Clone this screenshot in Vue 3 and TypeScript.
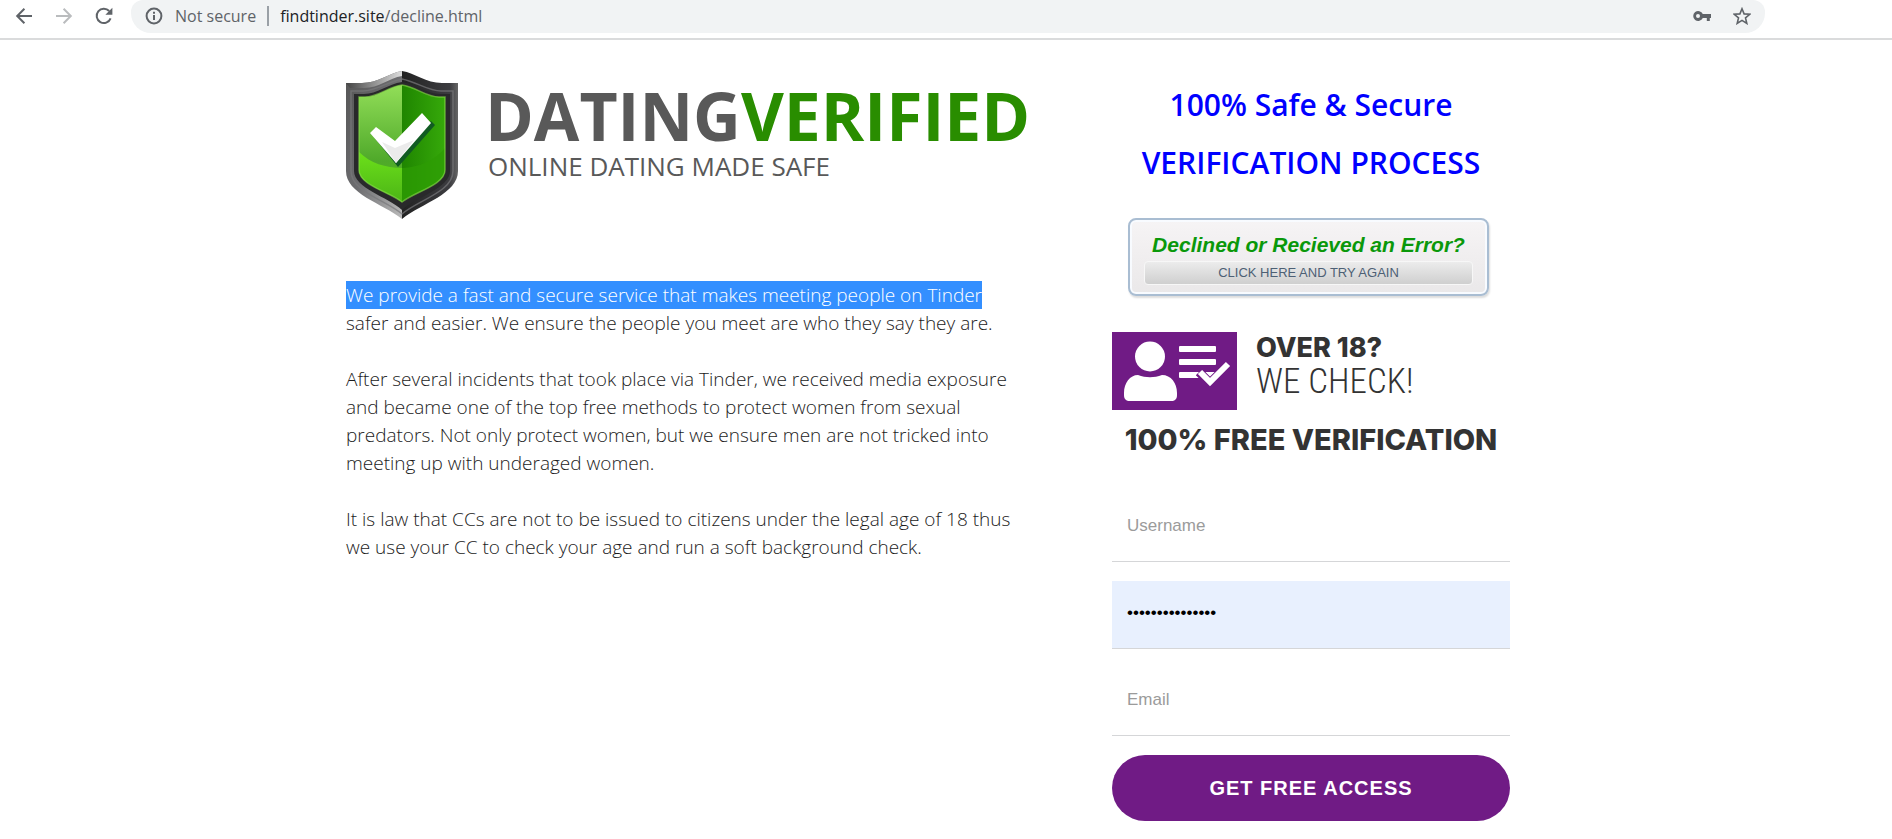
<script setup lang="ts">
import { ref } from 'vue'

const username = ref('')
const password = ref('datingverified1')
const email = ref('')
</script>

<template>
  <div class="window">
    <header class="toolbar">
      <nav class="nav" aria-label="Browser navigation">
        <button type="button" class="icon-button" aria-label="Back">
          <svg width="18" height="18" viewBox="0 0 18 18" fill="none" stroke="#5f6368" stroke-width="2">
            <path d="M17 9H2.4M9.4 1.8 2.2 9l7.2 7.2" />
          </svg>
        </button>
        <button type="button" class="icon-button" aria-label="Forward">
          <svg width="18" height="18" viewBox="0 0 18 18" fill="none" stroke="#babcbe" stroke-width="2">
            <path d="M1 9h14.6M8.6 1.8 15.8 9l-7.2 7.2" />
          </svg>
        </button>
        <button type="button" class="icon-button" aria-label="Reload">
          <svg width="18" height="18" viewBox="0 0 18 18">
            <path d="M15.6 11.4A7.2 7.2 0 1 1 14.2 4" fill="none" stroke="#5f6368" stroke-width="2" />
            <path d="M17.4.8v7h-7z" fill="#5f6368" />
          </svg>
        </button>
      </nav>
      <div class="omnibox">
        <svg width="18" height="18" viewBox="0 0 18 18" fill="none" stroke="#5f6368" stroke-width="2">
          <circle cx="9" cy="9" r="7.4" />
          <path d="M9 8v5M9 4.8v2" />
        </svg>
        <span class="status">Not secure</span>
        <span class="divider"></span>
        <span class="url"><span class="host">findtinder.site</span>/decline.html</span>
        <div class="actions">
          <button type="button" class="icon-button" aria-label="Saved passwords">
            <svg width="18" height="12" viewBox="0 0 18 12" fill="#5f6368">
              <path fill-rule="evenodd" d="M9.8 4H18v4h-1.2v3h-3V8h-4A5 5 0 1 1 9.8 4zM5 4a2 2 0 1 0 0 4 2 2 0 0 0 0-4z" />
            </svg>
          </button>
          <button type="button" class="icon-button" aria-label="Bookmark this page">
            <svg width="18" height="18" viewBox="0 0 18 18" fill="none" stroke="#5f6368" stroke-width="1.6">
              <path d="m9 1.800 2.100 5.100 5.700.4-4.300 3.600 1.300 5.500L9 13.400l-4.800 3 1.300-5.500L1.200 7.300l5.700-.4z" />
            </svg>
          </button>
        </div>
      </div>
    </header>

    <main class="page">
      <section class="about">
        <div class="brand">
          <svg class="shield" width="112" height="148" viewBox="0 0 112 148">
            <defs>
              <linearGradient id="rimLeft" x1="0" x2="1" y1="0" y2="1">
                <stop offset="0" stop-color="#555" />
                <stop offset=".5" stop-color="#6d6d70" />
                <stop offset="1" stop-color="#bbb" />
              </linearGradient>
              <linearGradient id="rimRight" x1="0" x2="1" y1="0" y2="0">
                <stop offset="0" stop-color="#222" />
                <stop offset=".85" stop-color="#3c3c40" />
                <stop offset="1" stop-color="#666" />
              </linearGradient>
              <linearGradient id="rimTop" x1="0" x2="1" y1="0" y2="0">
                <stop offset="0" stop-color="#444" />
                <stop offset="1" stop-color="#ddd" />
              </linearGradient>
              <linearGradient id="leafLight" x1="0" x2="0" y1="0" y2="1">
                <stop offset="0" stop-color="#92de58" />
                <stop offset=".65" stop-color="#4fa92a" />
                <stop offset="1" stop-color="#55bd14" />
              </linearGradient>
              <linearGradient id="leafDark" x1="0" x2="1" y1="0" y2="0">
                <stop offset="0" stop-color="#1f8500" />
                <stop offset="1" stop-color="#36a90a" />
              </linearGradient>
              <linearGradient id="glow" x1="0" x2="0" y1="0" y2="1">
                <stop offset="0" stop-color="#6ce01a" />
                <stop offset="1" stop-color="#4cb516" />
              </linearGradient>
            </defs>
            <path d="M56 0C43 2 32 12 16 12H0v88c0 23 36 32 56 48z" fill="url(#rimLeft)" />
            <path d="M56 0c13 2 24 12 40 12h16v88c0 23-36 32-56 48z" fill="url(#rimRight)" />
            <path d="M56 0C43 2 32 12 16 12H0l4 5h14c15 0 25-10 38-12z" fill="url(#rimTop)" />
            <path d="M56 11C42 13 31 23 18 23H8v77c0 17 34 26 48 39 14-13 48-22 48-39V23H94C81 23 70 13 56 11z" fill="#29292b" />
            <path d="M56 8C41 11 30 20 17 20H5v80c0 21 35 29 51 43 16-14 51-22 51-43V20H95C82 20 71 11 56 8z" fill="none" stroke="#77777b" stroke-width="1.5" opacity=".7" />
            <path d="M56 14C42 16 32 26 19 26h-6v73c0 15 31 22 43 32z" fill="url(#leafLight)" />
            <path d="M56 14c14 2 24 12 37 12h6v73c0 15-31 22-43 32z" fill="url(#leafDark)" />
            <path d="M13 81c11 11 27 16 43 16v34C44 121 13 114 13 99z" fill="url(#glow)" />
            <path d="M56 97c18-1 32-7 43-20v22c0 15-31 22-43 32z" fill="#2d9c04" opacity=".75" />
            <path d="M56 14C42 16 32 26 19 26h-6v73c0 15 31 22 43 32 12-10 43-17 43-32V26h-6C80 26 70 16 56 14z" fill="none" stroke="#8be04b" stroke-width="1.5" opacity=".6" />
            <path d="m27 65 25 31 37-42-4-4-34 38z" fill="#115b22" />
            <path d="m24 62 6-6 19 14 27-28 9 10-35 40z" fill="#fff" />
            <path d="m36 71 13 6 19-8-18 23z" fill="#ebebeb" />
          </svg>
          <div class="wordmark">
            <div class="name"><span>DATING</span><span class="verified">VERIFIED</span></div>
            <div class="tagline">ONLINE DATING MADE SAFE</div>
          </div>
        </div>

        <p><mark>We provide a fast and secure service that makes meeting people on Tinder</mark><br />safer and easier. We ensure the people you meet are who they say they are.</p>
        <p>After several incidents that took place via Tinder, we received media exposure<br />and became one of the top free methods to protect women from sexual<br />predators. Not only protect women, but we ensure men are not tricked into<br />meeting up with underaged women.</p>
        <p>It is law that CCs are not to be issued to citizens under the legal age of 18 thus<br />we use your CC to check your age and run a soft background check.</p>
      </section>

      <aside class="signup">
        <h1>100% Safe &amp; Secure<br />VERIFICATION PROCESS</h1>

        <button type="button" class="retry">
          <span class="retry-title">Declined or Recieved an Error?</span>
          <span class="retry-action">CLICK HERE AND TRY AGAIN</span>
        </button>

        <div class="age">
          <svg width="125" height="78" viewBox="0 0 125 78">
            <path d="M0 0h125v78H0z" fill="#701b85" />
            <g fill="#fff">
              <circle cx="38" cy="24.500" r="15" />
              <path d="M26 43c8 3 16 3 24 0 9 0 15 8 15 18v2c0 4-2 6-6 6H18c-4 0-6-2-6-6v-2c0-10 6-18 14-18z" />
              <rect x="67" y="14" width="37" height="6" rx="1" />
              <rect x="67" y="27" width="37" height="6" rx="1" />
              <rect x="67" y="40" width="37" height="6" rx="1" />
            </g>
            <path d="m87 40 11 11 19-19" fill="none" stroke="#701b85" stroke-width="9" />
            <path d="m88 40 10 10 18-18" fill="none" stroke="#fff" stroke-width="6" />
          </svg>
          <div>
            <h2>OVER 18?</h2>
            <div class="check">WE CHECK!</div>
          </div>
        </div>
        <h2 class="free">100% FREE VERIFICATION</h2>

        <form @submit.prevent>
          <input v-model="username" type="text" placeholder="Username" aria-label="Username" />
          <input v-model="password" class="filled" type="password" aria-label="Password" />
          <input v-model="email" type="email" placeholder="Email" aria-label="Email" />
          <button type="submit" class="submit">GET FREE ACCESS</button>
        </form>
      </aside>
    </main>
  </div>
</template>

<style>
body {
  margin: 0;
  background: #fff;
}
</style>

<style scoped>
.window {
  font-family: "Open Sans", "Noto Sans", sans-serif;
  color: #222;
}
button {
  cursor: pointer;
}
.toolbar {
  box-sizing: border-box;
  display: flex;
  align-items: flex-start;
  height: 40px;
  padding-right: 127px;
  border-bottom: 2px solid #dadbdc;
}
.nav {
  display: flex;
  gap: 22px;
  height: 32px;
  padding: 0 18px 0 15px;
  align-items: center;
}
.icon-button {
  display: flex;
  padding: 0;
  border: 0;
  background: none;
}
.omnibox {
  display: flex;
  flex: 1;
  align-items: center;
  box-sizing: border-box;
  height: 33px;
  padding: 0 14px 2px;
  border-radius: 12px 12px 20px 20px;
  background: #f1f3f4;
  color: #5f6368;
  font-size: 16px;
}
.status {
  margin-left: 12px;
}
.divider {
  width: 2px;
  height: 20px;
  margin: 0 11px;
  background: #9aa0a6;
}
.host {
  color: #202124;
}
.actions {
  display: flex;
  align-items: center;
  gap: 22px;
  margin-left: auto;
}
.page {
  display: flex;
  justify-content: space-between;
  max-width: 1164px;
  margin: 0 auto;
  padding: 31px 36px 16px 0;
}
.about {
  width: 690px;
}
.brand {
  display: flex;
  gap: 27px;
  margin-bottom: 62px;
}
.shield {
  flex: none;
}
.wordmark {
  display: flex;
  flex-direction: column;
  padding-top: 11px;
  color: #595959;
}
.name {
  font-size: 66px;
  font-weight: 700;
  line-height: 66px;
}
.verified {
  color: #298d00;
}
.tagline {
  padding-left: 3px;
  font-size: 26px;
  line-height: 36px;
}
.about p {
  margin: 0 0 28px;
  color: #1c1c1c;
  font-size: 19px;
  font-weight: 320;
  line-height: 28px;
  white-space: nowrap;
}
mark {
  display: inline-block;
  background: #338fff;
  color: #fff;
}
.signup {
  width: 398px;
}
h1,
h2 {
  margin: 0;
}
h1 {
  padding-top: 5px;
  color: #00f;
  font-size: 30px;
  font-weight: 600;
  line-height: 58px;
  text-align: center;
}
.retry {
  display: block;
  box-sizing: border-box;
  width: 361px;
  height: 78px;
  margin: 26px 0 36px 16px;
  padding: 4px 14px 0;
  border: 2px solid #a9bdd2;
  border-radius: 8px;
  background: linear-gradient(#f6f4f5, #eae8e9);
  box-shadow: inset 0 0 0 2px #f8fbff, 1px 2px 2px #ddd;
  font-family: "Liberation Sans", Arial, sans-serif;
}
.retry-title,
.retry-action {
  display: block;
}
.retry-title {
  color: #0a980a;
  font-size: 21px;
  font-style: italic;
  font-weight: 700;
  line-height: 22px;
  white-space: nowrap;
}
.retry-action {
  margin-top: 5px;
  border: 1px solid #f7f7f7;
  border-radius: 4px;
  background: linear-gradient(#ececec, #cfcfcf);
  color: #4d6075;
  font-size: 13px;
  line-height: 22px;
}
.age {
  display: flex;
  gap: 19px;
}
.age svg {
  flex: none;
}
h2 {
  color: #333;
  font-family: Inter, "Open Sans", sans-serif;
  font-size: 27px;
  font-weight: 800;
  line-height: 32px;
}
.check {
  color: #333;
  font-family: "Roboto Condensed", Roboto, sans-serif;
  font-size: 35px;
  font-weight: 300;
  line-height: 36px;
}
.free {
  margin-top: 14px;
  font-size: 29px;
  text-align: center;
  white-space: nowrap;
}
form {
  display: flex;
  flex-direction: column;
  gap: 19px;
  margin-top: 38px;
}
input {
  box-sizing: border-box;
  width: 100%;
  height: 68px;
  padding: 0 15px 4px;
  border: 0;
  border-bottom: 1px solid #d5d6d8;
  border-radius: 0;
  outline: 0;
  background: #fff;
  color: #000;
  font-family: "Liberation Sans", Arial, sans-serif;
  font-size: 17px;
}
input::placeholder {
  color: #9b9b9b;
}
.filled {
  background: #e8f0fe;
}
.submit {
  height: 66px;
  border: 0;
  border-radius: 33px;
  background: #701b85;
  color: #fff;
  font-family: "Liberation Sans", Arial, sans-serif;
  font-size: 20px;
  font-weight: 700;
  letter-spacing: 1px;
}
</style>
